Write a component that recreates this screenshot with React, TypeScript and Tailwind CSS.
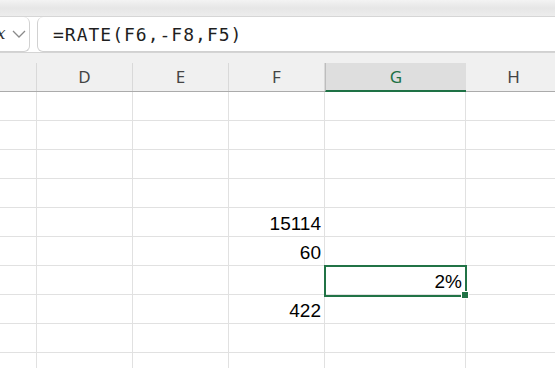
const cols = [
  { key: 'C', w: 'w-[37px]', label: '' },
  { key: 'D', w: 'w-[96px]', label: 'D' },
  { key: 'E', w: 'w-[96px]', label: 'E' },
  { key: 'F', w: 'w-[96px]', label: 'F' },
  { key: 'G', w: 'w-[141px]', label: 'G' },
  { key: 'H', w: 'w-[96px]', label: 'H' },
]

const values: Record<string, string> = {
  F5: '15114',
  F6: '60',
  G7: '2%',
  F8: '422',
}

const rows = [1, 2, 3, 4, 5, 6, 7, 8, 9, 10]

export default function App() {
  return (
    <div className="w-[555px] h-[368px] overflow-hidden bg-white font-['Liberation_Sans',Arial,sans-serif]">
      {/* toolbar strip */}
      <div className="h-[17px] bg-gradient-to-b from-[#f3f3f3] via-[#e6e6e6] to-[#ededed] border-b border-[#d6d6d6]" />

      {/* formula bar */}
      <div className="flex h-[35px] bg-white">
        <div className="ml-[-20px] w-[50px] h-[35px] flex items-center rounded-md border border-[#d1d1d1] border-t-0">
          <span className="ml-[15px] text-[17px] italic text-[#333] font-['DejaVu_Serif',serif]">x</span>
          <svg className="ml-[6px]" width="14" height="8" viewBox="0 0 14 8">
            <path d="M1 1 L7 7 L13 1" fill="none" stroke="#8a8a8a" strokeWidth="1.3" />
          </svg>
        </div>
        <div className="ml-[7px] flex-1 mr-[-20px] h-[35px] flex items-center rounded-md border border-[#d1d1d1] border-t-0 pl-[15px]">
          <span className="text-[18px] tracking-[1px] text-[#1f1f1f] font-['DejaVu_Sans_Mono',monospace]">=RATE(F6,-F8,F5)</span>
        </div>
      </div>

      {/* column headers */}
      <div className="bg-[#f0f0f0] border-t border-[#d4d4d4] pt-[10px]">
        <div className="flex h-[29px] border-b border-[#ababab] font-['Noto_Sans',sans-serif] text-[17px] text-[#444]">
          {cols.map(c =>
            c.key === 'G' ? (
              <div
                key={c.key}
                className={`${c.w} shrink-0 flex items-center justify-center bg-[#dedede] border-l border-[#bdbdbd] border-b-2 border-b-[#1e7145] mb-[-1px] text-[#1e7145]`}
              >
                {c.label}
              </div>
            ) : (
              <div key={c.key} className={`${c.w} shrink-0 flex items-center justify-center border-r border-[#d9d9d9]`}>
                {c.label}
              </div>
            ),
          )}
        </div>
      </div>

      {/* grid */}
      <div>
        {rows.map(r => (
          <div key={r} className="flex h-[29px]">
            {cols.map(c => {
              const id = `${c.key}${r}`
              const v = values[id]
              const selected = id === 'G7'
              return (
                <div
                  key={id}
                  className={`${c.w} shrink-0 relative flex items-end justify-end pr-[3px] pb-[2px] border-r border-b border-[#e1e1e1] text-[19px] leading-[21px] text-black`}
                >
                  {v}
                  {selected && (
                    <>
                      <div className="absolute z-10 left-[-1px] top-[-1px] w-[143px] h-[32px] border-2 border-[#217346]" />
                      <div className="absolute z-20 left-[136px] top-[25px] w-[8px] h-[8px] bg-[#217346] border border-white" />
                    </>
                  )}
                </div>
              )
            })}
          </div>
        ))}
      </div>
    </div>
  )
}
